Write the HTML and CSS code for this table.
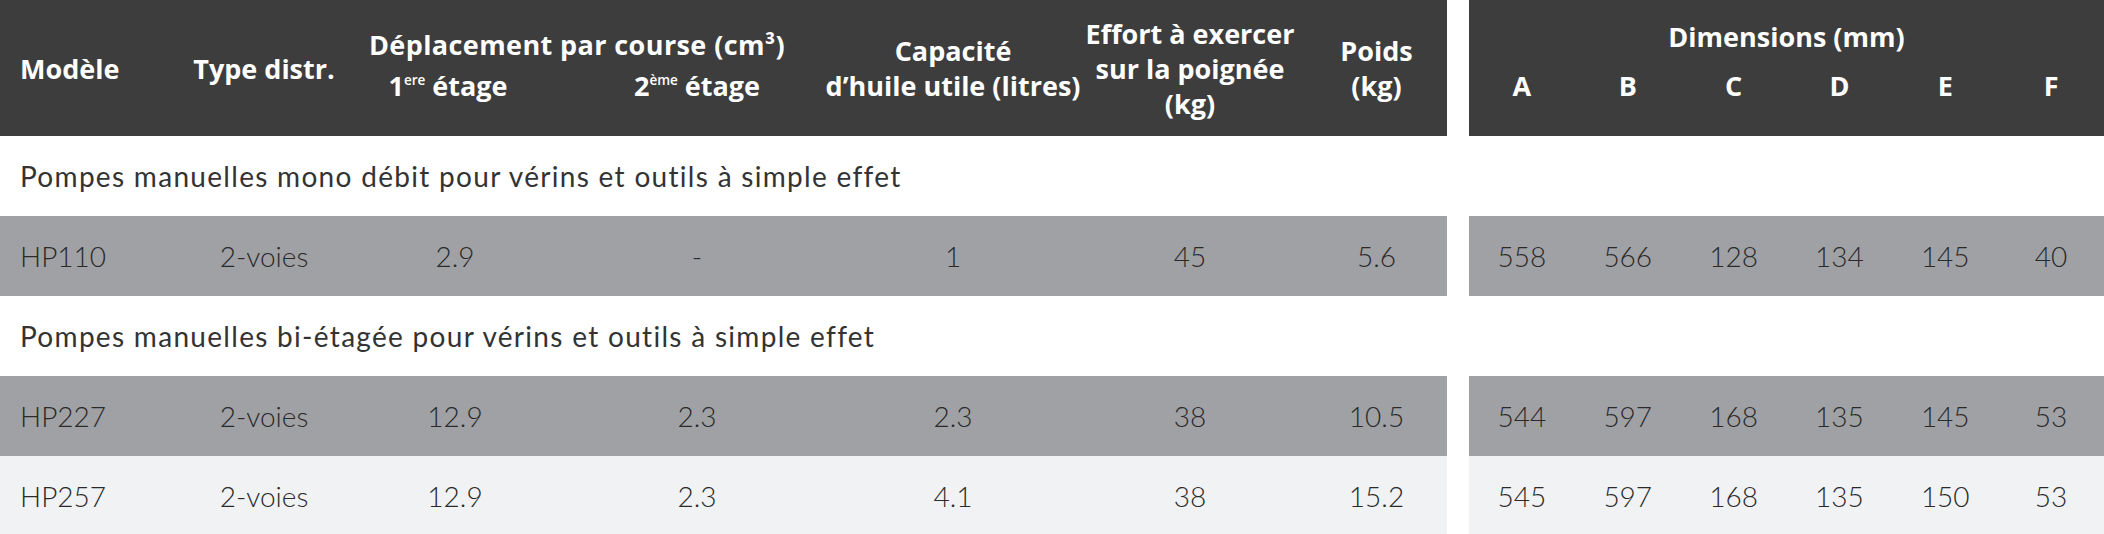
FILE: index.html
```html
<!DOCTYPE html>
<html lang="fr">
<head>
<meta charset="utf-8">
<title>Pompes manuelles</title>
<link rel="stylesheet" href="styles.css">
</head>
<body>
<div class="table">
  <div class="row head">
    <div class="left cols">
      <div class="hcell first">Modèle</div>
      <div class="hcell">Type distr.</div>
      <div class="hgroup">
        <div class="htitle">Déplacement par course (cm³)</div>
        <div class="hsub">
          <div class="hsubcell">1<sup>ere</sup> étage</div>
          <div class="hsubcell">2<sup>ème</sup> étage</div>
        </div>
      </div>
      <div class="hcell">Capacité<br>d’huile utile (litres)</div>
      <div class="hcell">Effort à exercer<br>sur la poignée<br>(kg)</div>
      <div class="hcell">Poids<br>(kg)</div>
    </div>
    <div class="right dimhead">
      <div class="dimtitle">Dimensions (mm)</div>
      <div class="dims">
        <div>A</div><div>B</div><div>C</div><div>D</div><div>E</div><div>F</div>
      </div>
    </div>
  </div>

  <div class="section">Pompes manuelles mono débit pour vérins et outils à simple effet</div>

  <div class="row data dark">
    <div class="left cols">
      <div class="cell first">HP110</div><div class="cell">2-voies</div><div class="cell">2.9</div><div class="cell">-</div><div class="cell">1</div><div class="cell">45</div><div class="cell">5.6</div>
    </div>
    <div class="right dims">
      <div class="cell">558</div><div class="cell">566</div><div class="cell">128</div><div class="cell">134</div><div class="cell">145</div><div class="cell">40</div>
    </div>
  </div>

  <div class="section">Pompes manuelles bi-étagée pour vérins et outils à simple effet</div>

  <div class="row data dark">
    <div class="left cols">
      <div class="cell first">HP227</div><div class="cell">2-voies</div><div class="cell">12.9</div><div class="cell">2.3</div><div class="cell">2.3</div><div class="cell">38</div><div class="cell">10.5</div>
    </div>
    <div class="right dims">
      <div class="cell">544</div><div class="cell">597</div><div class="cell">168</div><div class="cell">135</div><div class="cell">145</div><div class="cell">53</div>
    </div>
  </div>

  <div class="row data light">
    <div class="left cols">
      <div class="cell first">HP257</div><div class="cell">2-voies</div><div class="cell">12.9</div><div class="cell">2.3</div><div class="cell">4.1</div><div class="cell">38</div><div class="cell">15.2</div>
    </div>
    <div class="right dims">
      <div class="cell">545</div><div class="cell">597</div><div class="cell">168</div><div class="cell">135</div><div class="cell">150</div><div class="cell">53</div>
    </div>
  </div>
</div>
</body>
</html>
```
FILE: styles.css
```css
* { box-sizing: border-box; }
html, body { margin: 0; padding: 0; background: #ffffff; }
body {
  width: 2104px;
  font-family: "Lato", "Open Sans", sans-serif;
}
.table { width: 2104px; }

.row {
  display: flex;
  gap: 22px;
}
.left { width: 1447px; }
.right { width: 635px; }

.cols {
  display: grid;
  grid-template-columns: 180px 168px 214px 270px 242px 232px 141px;
}
.dims {
  display: grid;
  grid-template-columns: repeat(6, 1fr);
}

/* header */
.head { height: 136px; }
.head .left, .head .right {
  background: #3d3d3d;
  color: #ffffff;
  font-family: "Open Sans", "Lato", sans-serif;
  font-weight: 700;
  font-size: 27px;
  line-height: 35px;
}
.hcell {
  display: flex;
  align-items: center;
  justify-content: center;
  text-align: center;
  white-space: nowrap;
}
.hcell.first { justify-content: flex-start; padding-left: 20px; }
.hgroup {
  grid-column: span 2;
  display: flex;
  flex-direction: column;
  justify-content: center;
  padding-bottom: 6px;
}
.htitle {
  text-align: center;
  padding-right: 26px;
  white-space: nowrap;
  margin-bottom: 6px;
  letter-spacing: 0.4px;
}
.hsub {
  display: grid;
  grid-template-columns: 214px 270px;
}
.hsubcell { text-align: center; white-space: nowrap; }
.hsubcell:first-child { padding-right: 14px; }
sup {
  font-size: 0.5em;
  line-height: 0;
  vertical-align: 0.8em;
  font-weight: 600;
}
.dimhead {
  display: flex;
  flex-direction: column;
  justify-content: center;
  padding-bottom: 15px;
}
.dimtitle { text-align: center; margin-bottom: 14px; }
.dimhead .dims div { text-align: center; }

/* section titles */
.section {
  height: 80px;
  display: flex;
  align-items: center;
  padding-left: 20px;
  font-family: "Lato", sans-serif;
  font-weight: 400;
  font-size: 28px;
  letter-spacing: 1.3px;
  color: #333333;
  white-space: nowrap;
}

/* data rows */
.data { height: 80px; }
.data .left, .data .right { height: 80px; }
.dark .left, .dark .right { background: #a0a1a5; }
.light .left, .light .right { background: #f1f2f4; }
.cell {
  display: flex;
  align-items: center;
  justify-content: center;
  font-family: "Lato", sans-serif;
  font-weight: 300;
  font-size: 28px;
  color: #2a2a2a;
  white-space: nowrap;
}
.cell.first { justify-content: flex-start; padding-left: 20px; }
```
